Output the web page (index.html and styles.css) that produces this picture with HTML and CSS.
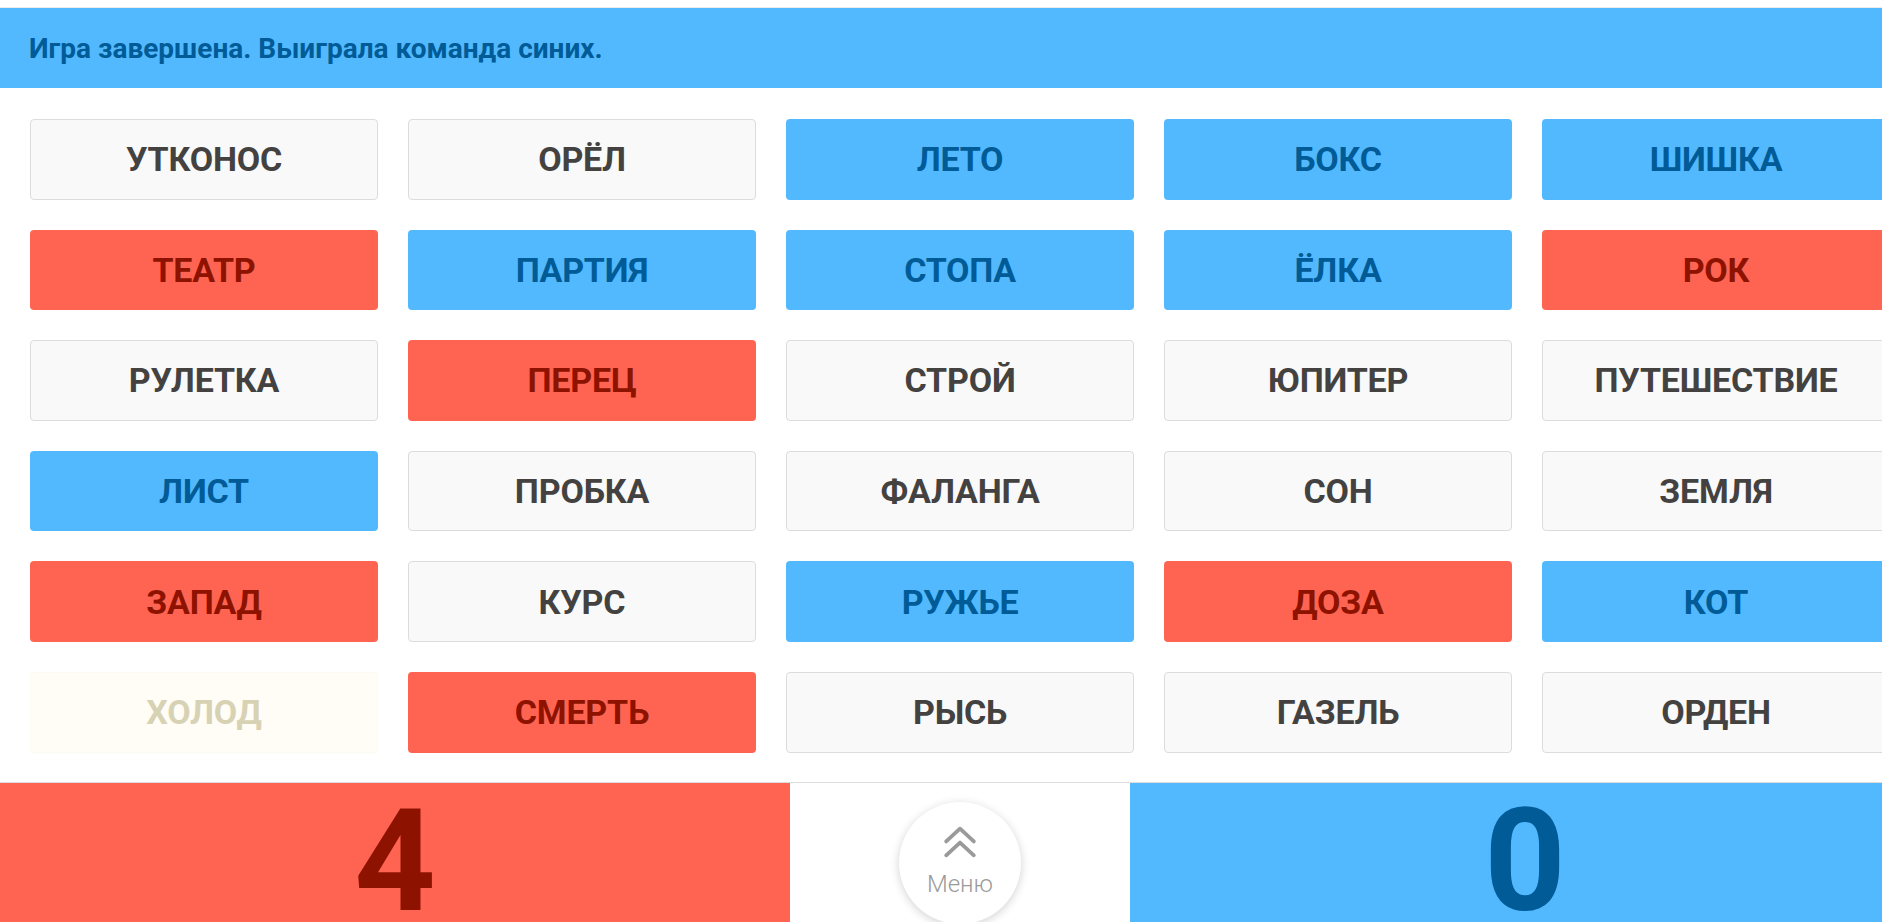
FILE: index.html
```html
<!DOCTYPE html>
<html lang="ru">
<head>
<meta charset="utf-8">
<title>Игра</title>
<link rel="stylesheet" href="styles.css">
</head>
<body>
<div class="page">
  <div class="topline"></div>
  <header class="status">Игра завершена. Выиграла команда синих.</header>
  <main class="board">
    <div class="card neutral">УТКОНОС</div>
    <div class="card neutral">ОРЁЛ</div>
    <div class="card blue">ЛЕТО</div>
    <div class="card blue">БОКС</div>
    <div class="card blue">ШИШКА</div>

    <div class="card red">ТЕАТР</div>
    <div class="card blue">ПАРТИЯ</div>
    <div class="card blue">СТОПА</div>
    <div class="card blue">ЁЛКА</div>
    <div class="card red">РОК</div>

    <div class="card neutral">РУЛЕТКА</div>
    <div class="card red">ПЕРЕЦ</div>
    <div class="card neutral">СТРОЙ</div>
    <div class="card neutral">ЮПИТЕР</div>
    <div class="card neutral">ПУТЕШЕСТВИЕ</div>

    <div class="card blue">ЛИСТ</div>
    <div class="card neutral">ПРОБКА</div>
    <div class="card neutral">ФАЛАНГА</div>
    <div class="card neutral">СОН</div>
    <div class="card neutral">ЗЕМЛЯ</div>

    <div class="card red">ЗАПАД</div>
    <div class="card neutral">КУРС</div>
    <div class="card blue">РУЖЬЕ</div>
    <div class="card red">ДОЗА</div>
    <div class="card blue">КОТ</div>

    <div class="card pale">ХОЛОД</div>
    <div class="card red">СМЕРТЬ</div>
    <div class="card neutral">РЫСЬ</div>
    <div class="card neutral">ГАЗЕЛЬ</div>
    <div class="card neutral">ОРДЕН</div>
  </main>
  <footer class="scores">
    <div class="score score-red">4</div>
    <div class="menu-cell">
      <div class="menu-btn">
        <svg class="chev" width="34" height="34" viewBox="0 0 32 32" aria-hidden="true">
          <path d="M3 15.5 L16 3.5 L29 15.5" fill="none" stroke="#9a9a9a" stroke-width="3.6" stroke-linecap="round" stroke-linejoin="round"/>
          <path d="M3 28.5 L16 16.5 L29 28.5" fill="none" stroke="#9a9a9a" stroke-width="3.6" stroke-linecap="round" stroke-linejoin="round"/>
        </svg>
        <span class="menu-label">Меню</span>
      </div>
    </div>
    <div class="score score-blue">0</div>
  </footer>
</div>
</body>
</html>
```

FILE: styles.css
```css
html, body {
  margin: 0;
  padding: 0;
  background: #fff;
  overflow: hidden;
}
body {
  font-family: Roboto, "Noto Sans", "Liberation Sans", sans-serif;
}
.page {
  width: 1920px;
  height: 922px;
  display: flex;
  flex-direction: column;
}
.topline {
  height: 8px;
  border-bottom: 1px solid #ececec;
  box-sizing: border-box;
}
.status {
  height: 80px;
  background: #52b9ff;
  color: #005b96;
  font-weight: 700;
  font-size: 28px;
  display: flex;
  align-items: center;
  padding-left: 29px;
  box-sizing: border-box;
}
.board {
  display: grid;
  grid-template-columns: repeat(5, 348px);
  grid-auto-rows: 80.6px;
  column-gap: 30px;
  row-gap: 30px;
  padding: 31px 30px 0 30px;
  height: 694px;
  box-sizing: border-box;
}
.card {
  border-radius: 4px;
  display: flex;
  align-items: center;
  justify-content: center;
  font-weight: 700;
  font-size: 34px;
  letter-spacing: -0.2px;
  box-sizing: border-box;
}
.neutral {
  background: #f9f9f9;
  border: 1px solid #dcdcdc;
  color: #444240;
}
.blue {
  background: #52b9ff;
  color: #005b96;
}
.red {
  background: #ff6452;
  color: #8d1200;
}
.pale {
  background: #fffdf6;
  border: 1px solid #fdfaf0;
  color: #d8d2b5;
}
.scores {
  flex: 1;
  display: grid;
  grid-template-columns: 790px 340px 790px;
  border-top: 1px solid #dedede;
  overflow: hidden;
}
.score {
  font-weight: 700;
  font-size: 142px;
  line-height: 1;
  text-align: center;
  padding-top: 8px;
}
.score-red {
  background: #ff6452;
  color: #8d1200;
}
.score-blue {
  background: #52b9ff;
  color: #005b96;
}
.menu-cell {
  background: #fff;
  display: flex;
  justify-content: center;
  padding-top: 19px;
}
.menu-btn {
  width: 122px;
  height: 122px;
  border-radius: 50%;
  background: #fff;
  box-shadow: 0 2px 10px rgba(0, 0, 0, 0.18);
  display: flex;
  flex-direction: column;
  align-items: center;
  padding-top: 23px;
  box-sizing: border-box;
}
.chev {
  display: block;
}
.menu-label {
  margin-top: 13px;
  font-weight: 300;
  font-size: 24px;
  color: #9a9a9a;
  line-height: 1;
}
```
